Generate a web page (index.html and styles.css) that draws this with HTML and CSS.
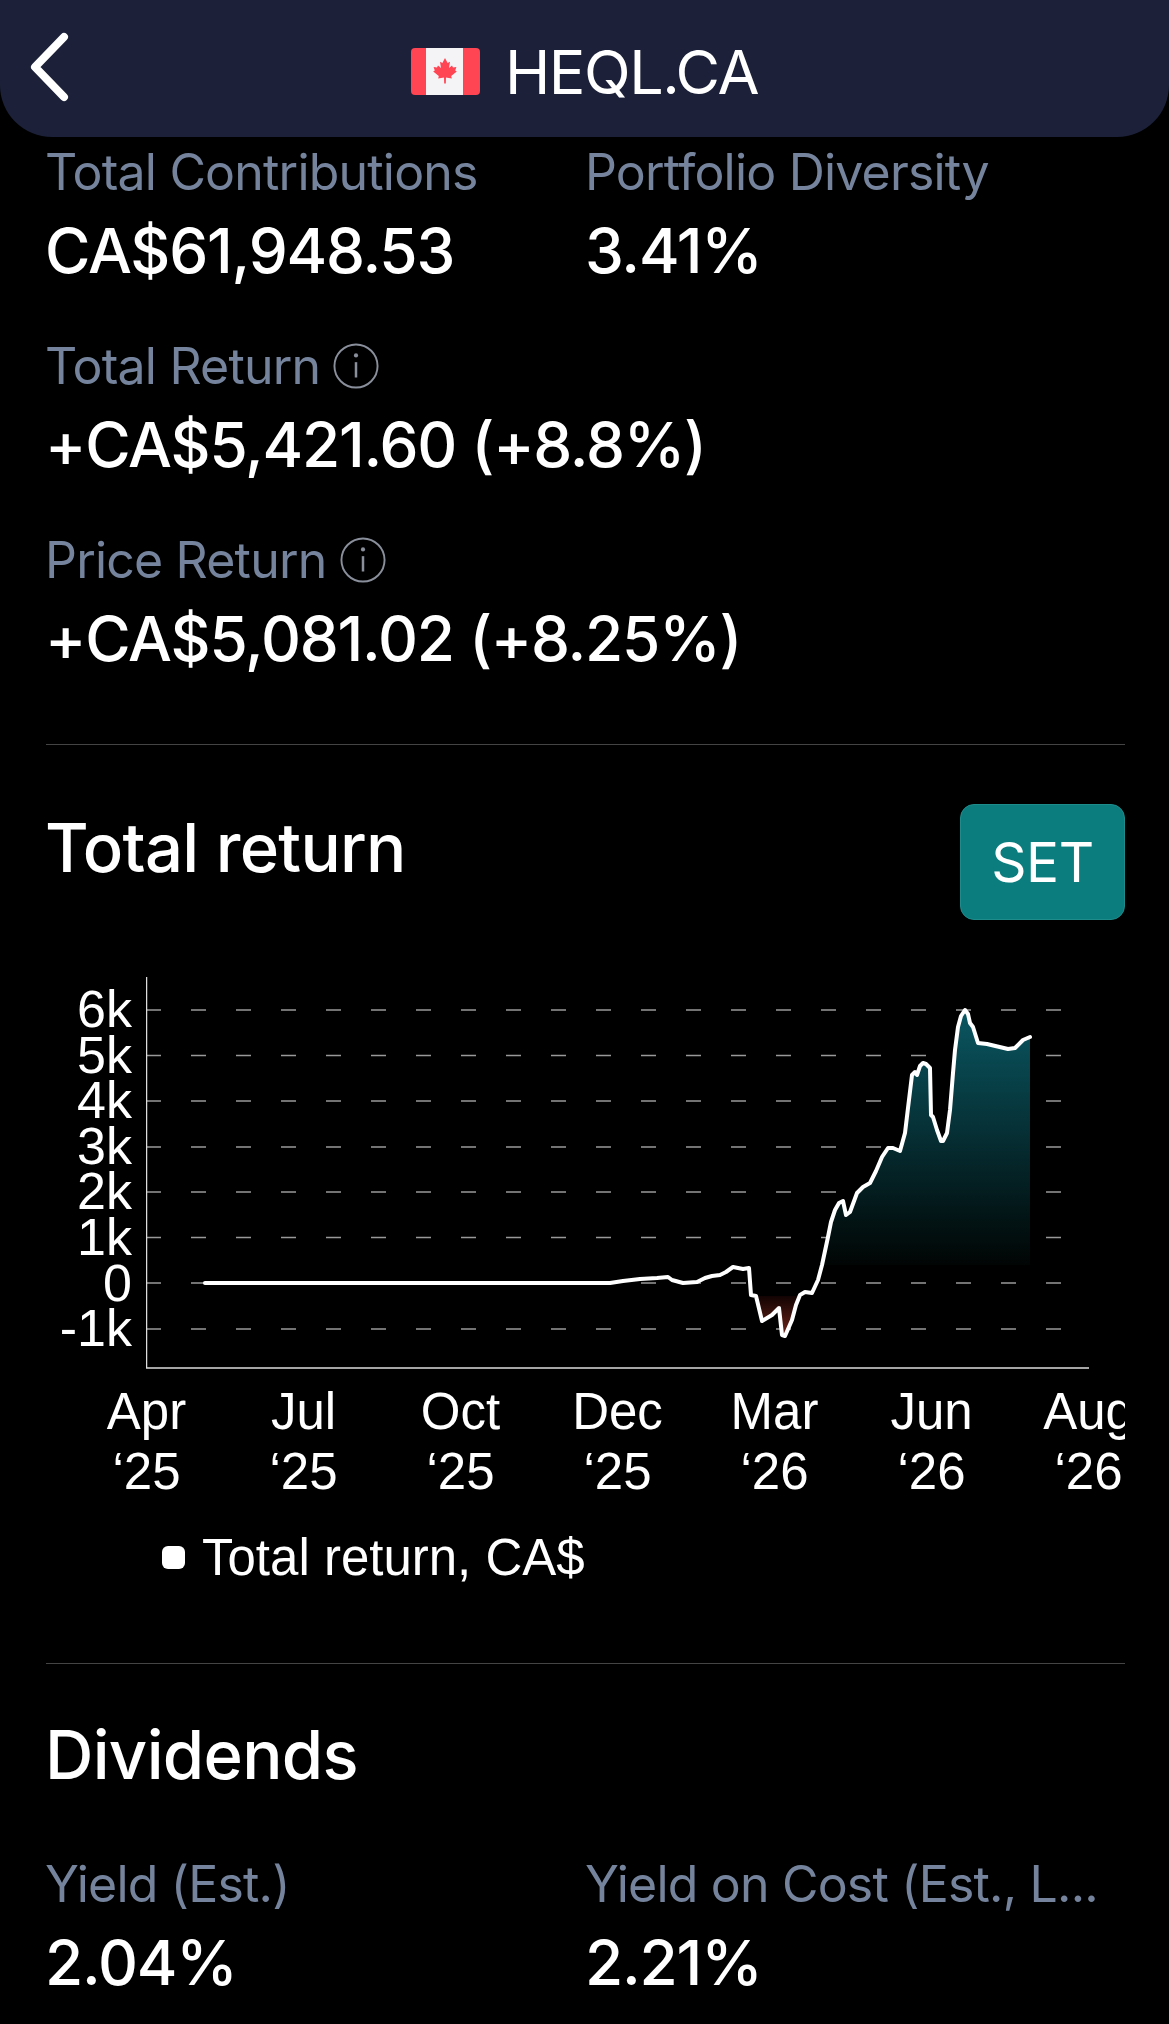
FILE: index.html
```html
<!DOCTYPE html>
<html lang="en">

<head>
  <meta charset="UTF-8">
  <meta name="viewport" content="width=device-width, initial-scale=1.0">
  <title>HEQL.CA</title>
  <link rel="stylesheet" href="styles.css">
</head>

<body>
  <div id="container">
    <div class="top">
      <svg class="back" width="50" height="80" viewBox="0 0 50 80">
        <polyline points="40,9 11,39 40,69" fill="none" stroke="#fff" stroke-width="8" stroke-linecap="round" stroke-linejoin="round" />
      </svg>
      <div class="ticker">
        <svg class="flag" width="69" height="47" viewBox="0 0 69 47">
          <rect width="69" height="47" rx="4" fill="#ff4453" />
          <rect x="15" width="37" height="47" fill="#f4f4f6" />
          <path d="M34 10l2.600 5 2.400-1.200-1 6.200 3-2.500 1 2 3.400-.6-1.200 3.500 1.600 1-5.600 4.600.6 2.400-5.800-.8-.2 6h-1.600l-.2-6-5.800.8.600-2.400-5.600-4.600 1.600-1-1.200-3.500 3.400.6 1-2 3 2.500-1-6.200 2.400 1.200z" fill="#ff4453" />
        </svg>
        <span>HEQL.CA</span>
      </div>
    </div>

    <div class="stats">
      <div class="stat-row two">
        <div class="stat">
          <div class="label">Total Contributions</div>
          <div class="value">CA$61,948.53</div>
        </div>
        <div class="stat">
          <div class="label">Portfolio Diversity</div>
          <div class="value">3.41%</div>
        </div>
      </div>
      <div class="stat">
        <div class="label">Total Return
          <svg class="info" width="46" height="46" viewBox="0 0 48 48">
            <circle cx="24" cy="24" r="22.500" fill="none" stroke="#8a8f9c" stroke-width="2" />
            <circle cx="24" cy="13" r="2.200" fill="#8a8f9c" />
            <rect x="22.700" y="20" width="2.600" height="16" fill="#8a8f9c" />
          </svg>
        </div>
        <div class="value">+CA$5,421.60 (+8.8%)</div>
      </div>
      <div class="stat">
        <div class="label">Price Return
          <svg class="info" width="46" height="46" viewBox="0 0 48 48">
            <circle cx="24" cy="24" r="22.500" fill="none" stroke="#8a8f9c" stroke-width="2" />
            <circle cx="24" cy="13" r="2.200" fill="#8a8f9c" />
            <rect x="22.700" y="20" width="2.600" height="16" fill="#8a8f9c" />
          </svg>
        </div>
        <div class="value">+CA$5,081.02 (+8.25%)</div>
      </div>
    </div>

    <hr class="line first">

    <div class="heading-row">
      <div class="heading">Total return</div>
      <button class="set-btn">SET</button>
    </div>

    <div class="chart">
      <div class="y-labels">
        <span>6k</span><span>5k</span><span>4k</span><span>3k</span><span>2k</span><span>1k</span><span>0</span><span>-1k</span>
      </div>
      <svg class="plot" width="944" height="392" viewBox="146 977 944 392">
        <defs>
          <linearGradient id="teal" gradientUnits="userSpaceOnUse" x1="0" y1="1010" x2="0" y2="1265">
            <stop offset="0" stop-color="#0a5762" />
            <stop offset="1" stop-color="#010504" />
          </linearGradient>
          <linearGradient id="red" gradientUnits="userSpaceOnUse" x1="0" y1="1294" x2="0" y2="1335">
            <stop offset="0" stop-color="#0d0202" />
            <stop offset="1" stop-color="#6e2418" />
          </linearGradient>
        </defs>
        <g class="grid">
          <line x1="146" x2="1064" y1="1010" y2="1010" />
          <line x1="146" x2="1064" y1="1055.500" y2="1055.500" />
          <line x1="146" x2="1064" y1="1101" y2="1101" />
          <line x1="146" x2="1064" y1="1147" y2="1147" />
          <line x1="146" x2="1064" y1="1192" y2="1192" />
          <line x1="146" x2="1064" y1="1237.500" y2="1237.500" />
          <line x1="146" x2="1064" y1="1283" y2="1283" />
          <line x1="146" x2="1064" y1="1329" y2="1329" />
        </g>
        <polygon fill="url(#teal)" points="822,1265 828,1237 831,1222 835,1210 839,1203 843,1201 846,1215 850,1212 857,1193 863,1187 870,1183 876,1171 882,1157 888,1148 893,1148 900,1151 905,1133 908,1108 912,1075 915,1072 917,1075 920,1066 923,1063 926,1064 930,1068 931,1115 933,1117 937,1130 941,1141 943,1141 947,1133 950,1110 953,1073 955,1050 958,1027 961,1016 965,1010 968,1014 970,1023 973,1027 978,1043 987,1044 1008,1049 1015,1048 1023,1040 1030,1037 1030,1265" />
        <polygon fill="url(#red)" points="756,1296 762,1321 772,1315 779,1308 782,1335 785,1336 792,1320 800,1296" />
        <polyline class="curve" points="205,1283 610,1283 623,1281 640,1279 657,1278 668,1277 672,1280 683,1283 697,1282 705,1278 712,1276 720,1275 726,1272 733,1267 743,1269 749,1268 751,1295 756,1296 762,1321 772,1315 779,1308 782,1335 785,1336 792,1320 796,1305 800,1295 805,1292 812,1293 818,1280 822,1265 828,1237 831,1222 835,1210 839,1203 843,1201 846,1215 850,1212 857,1193 863,1187 870,1183 876,1171 882,1157 888,1148 893,1148 900,1151 905,1133 908,1108 912,1075 915,1072 917,1075 920,1066 923,1063 926,1064 930,1068 931,1115 933,1117 937,1130 941,1141 943,1141 947,1133 950,1110 953,1073 955,1050 958,1027 961,1016 965,1010 968,1014 970,1023 973,1027 978,1043 987,1044 1008,1049 1015,1048 1023,1040 1030,1037" />
        <line class="axis" x1="146.500" y1="977" x2="146.500" y2="1368" />
        <line class="axis" x1="146" y1="1368" x2="1089" y2="1368" />
      </svg>
    </div>

    <div class="x-labels">
      <div>Apr<br>‘25</div>
      <div>Jul<br>‘25</div>
      <div>Oct<br>‘25</div>
      <div>Dec<br>‘25</div>
      <div>Mar<br>‘26</div>
      <div>Jun<br>‘26</div>
      <div>Aug<br>‘26</div>
    </div>

    <div class="legend"><i class="dot"></i>Total return, CA$</div>

    <hr class="line second">

    <div class="heading dividends">Dividends</div>

    <div class="stat-row two">
      <div class="stat">
        <div class="label">Yield (Est.)</div>
        <div class="value">2.04%</div>
      </div>
      <div class="stat">
        <div class="label">Yield on Cost (Est., L...</div>
        <div class="value">2.21%</div>
      </div>
    </div>
  </div>
</body>

</html>
```
FILE: styles.css
```css
* {
  box-sizing: border-box;
}

html,
body {
  margin: 0;
  height: 2024px;
  overflow: hidden;
  background-color: #000;
}

#container {
  width: 1169px;
  height: 2024px;
  overflow: hidden;
  color: #fff;
  font-family: Inter, 'Liberation Sans', sans-serif;
}

.top {
  height: 137px;
  background-color: #1c2139;
  border-radius: 0 0 52px 52px;
  display: flex;
  justify-content: center;
  position: relative;
}

.back {
  position: absolute;
  left: 24px;
  top: 28px;
}

.ticker {
  display: flex;
  align-items: center;
  gap: 25px;
  height: 143px;
  font-size: 61px;
  letter-spacing: -1.500px;
}

.stats {
  padding: 0 45px;
  margin-top: 10px;
  display: flex;
  flex-direction: column;
  gap: 61px;
}

.stat-row.two {
  display: grid;
  grid-template-columns: 540px 1fr;
}

.label {
  display: flex;
  align-items: center;
  gap: 13px;
  height: 50px;
  font-size: 50px;
  letter-spacing: -.800px;
  color: #75849c;
  white-space: nowrap;
}

.value {
  height: 59px;
  margin-top: 24px;
  line-height: 59px;
  font-size: 62px;
  font-weight: 500;
  letter-spacing: -1.200px;
  white-space: nowrap;
}

.line {
  height: 1px;
  margin: 0 44px 0 46px;
  border: 0;
  background-color: #444;
}

.line.first {
  margin-top: 76px;
}

.heading-row {
  display: flex;
  justify-content: space-between;
  margin: 59px 44px 0 45px;
}

.heading {
  font-size: 67px;
  font-weight: 500;
  letter-spacing: -.700px;
  height: 88px;
  line-height: 88px;
}

.set-btn {
  width: 165px;
  height: 116px;
  border: 1px solid #1f8c8c;
  border-radius: 14px;
  background-color: #0b7d7e;
  color: #fff;
  font-family: Inter, 'Liberation Sans', sans-serif;
  font-size: 55px;
  letter-spacing: -.500px;
}

.chart {
  display: flex;
  margin-top: 57px;
  font-family: 'Liberation Sans', Arial, sans-serif;
}

.y-labels {
  width: 146px;
  height: 392px;
  padding: 10px 14px 0 0;
  display: flex;
  flex-direction: column;
  align-items: flex-end;
  font-size: 52px;
}

.y-labels span {
  flex: 0 0 45.600px;
  line-height: 45.600px;
}

.plot {
  display: block;
}

.grid line {
  stroke: #999;
  stroke-width: 1.500;
  stroke-dasharray: 15 30;
}

.curve {
  fill: none;
  stroke: #fff;
  stroke-width: 4;
  stroke-linejoin: round;
  stroke-linecap: round;
}

.axis {
  stroke: #ddd;
  stroke-width: 1.500;
}

.x-labels {
  display: grid;
  grid-template-columns: repeat(7, 157px);
  width: 1057px;
  margin: 13px 0 0 68px;
  overflow: hidden;
  font-family: 'Liberation Sans', Arial, sans-serif;
  font-size: 51px;
  line-height: 60px;
  text-align: center;
}

.legend {
  display: flex;
  align-items: center;
  margin: 25px 0 0 162px;
  height: 60px;
  font-family: 'Liberation Sans', Arial, sans-serif;
  font-size: 51px;
}

.dot {
  width: 23px;
  height: 23px;
  margin-right: 17px;
  border-radius: 6px;
  background-color: #fff;
}

.line.second {
  margin-top: 76px;
}

.dividends {
  margin: 47px 0 0 45px;
}

.stat-row.two:last-child {
  margin: 60px 0 0 45px;
}
```
